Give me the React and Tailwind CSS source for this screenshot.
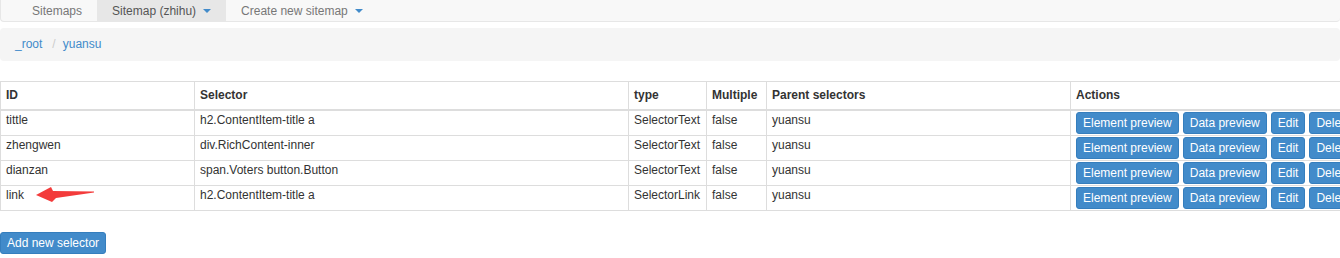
import React from 'react';

const rows = [
  { id: 'tittle', selector: 'h2.ContentItem-title a', type: 'SelectorText' },
  { id: 'zhengwen', selector: 'div.RichContent-inner', type: 'SelectorText' },
  { id: 'dianzan', selector: 'span.Voters button.Button', type: 'SelectorText' },
  { id: 'link', selector: 'h2.ContentItem-title a', type: 'SelectorLink', arrow: true },
];

function Caret() {
  return <span className="ml-[7px] inline-block h-0 w-0 border-x-[4px] border-t-[4px] border-x-transparent border-t-[#428bca] align-middle" />;
}

function Btn({ children }) {
  return (
    <button className="h-[22px] shrink-0 rounded-[3px] border border-[#357ebd] bg-[#428bca] px-[6px] text-[12px] leading-[18px] text-white">
      {children}
    </button>
  );
}

export default function App() {
  const cell = 'border border-[#ddd] px-[5px] pt-[1px] pb-0 align-top leading-[17px]';
  return (
    <div className="h-[258px] w-[1340px] overflow-hidden bg-white font-['Liberation_Sans',Arial,sans-serif] text-[12px] text-[#333]">
      {/* navbar */}
      <div className="flex h-[22px] rounded-b-[4px] border-b border-l border-[#e7e7e7] bg-[#f8f8f8] pl-[16px] text-[#777]">
        <div className="flex h-[21px] items-center px-[15px]">Sitemaps</div>
        <div className="flex h-[21px] items-center bg-[#e7e7e7] px-[15px] text-[#555]">
          Sitemap (zhihu)
          <Caret />
        </div>
        <div className="flex h-[21px] items-center px-[15px]">
          Create new sitemap
          <Caret />
        </div>
      </div>

      {/* breadcrumb */}
      <div className="mt-[6px] flex h-[33px] items-center rounded-[4px] bg-[#f5f5f5] px-[15px] pb-[1px]">
        <span className="text-[#428bca]">_root</span>
        <span className="pl-[10px] pr-[7px] text-[#ccc]">/</span>
        <span className="text-[#428bca]">yuansu</span>
      </div>

      {/* selectors table */}
      <table className="mt-[20px] w-[1370px] table-fixed border-collapse">
        <colgroup>
          <col className="w-[194px]" />
          <col className="w-[434px]" />
          <col className="w-[78px]" />
          <col className="w-[60px]" />
          <col className="w-[304px]" />
          <col className="w-[300px]" />
        </colgroup>
        <thead>
          <tr className="h-[28px]">
            {['ID', 'Selector', 'type', 'Multiple', 'Parent selectors', 'Actions'].map((h) => (
              <th key={h} className="border border-b-2 border-[#ddd] px-[5px] text-left align-middle font-bold">
                {h}
              </th>
            ))}
          </tr>
        </thead>
        <tbody>
          {rows.map((r) => (
            <tr key={r.id} className="h-[25px]">
              <td className={cell + ' relative'}>
                {r.id}
                {r.arrow && (
                  <svg className="absolute left-0 top-0" width="100" height="25" viewBox="0 0 100 25">
                    <polygon points="35,9 50,1 52,5 93,5.5 93,6.5 55,12 51,16" fill="#f33b3b" />
                  </svg>
                )}
              </td>
              <td className={cell}>{r.selector}</td>
              <td className={cell}>{r.type}</td>
              <td className={cell}>false</td>
              <td className={cell}>yuansu</td>
              <td className="border border-[#ddd] px-[5px] py-px align-middle">
                <div className="flex gap-[4px]">
                  <Btn>Element preview</Btn>
                  <Btn>Data preview</Btn>
                  <Btn>Edit</Btn>
                  <Btn>Delete</Btn>
                </div>
              </td>
            </tr>
          ))}
        </tbody>
      </table>

      <div className="mt-[21px]">
        <Btn>Add new selector</Btn>
      </div>
    </div>
  );
}
